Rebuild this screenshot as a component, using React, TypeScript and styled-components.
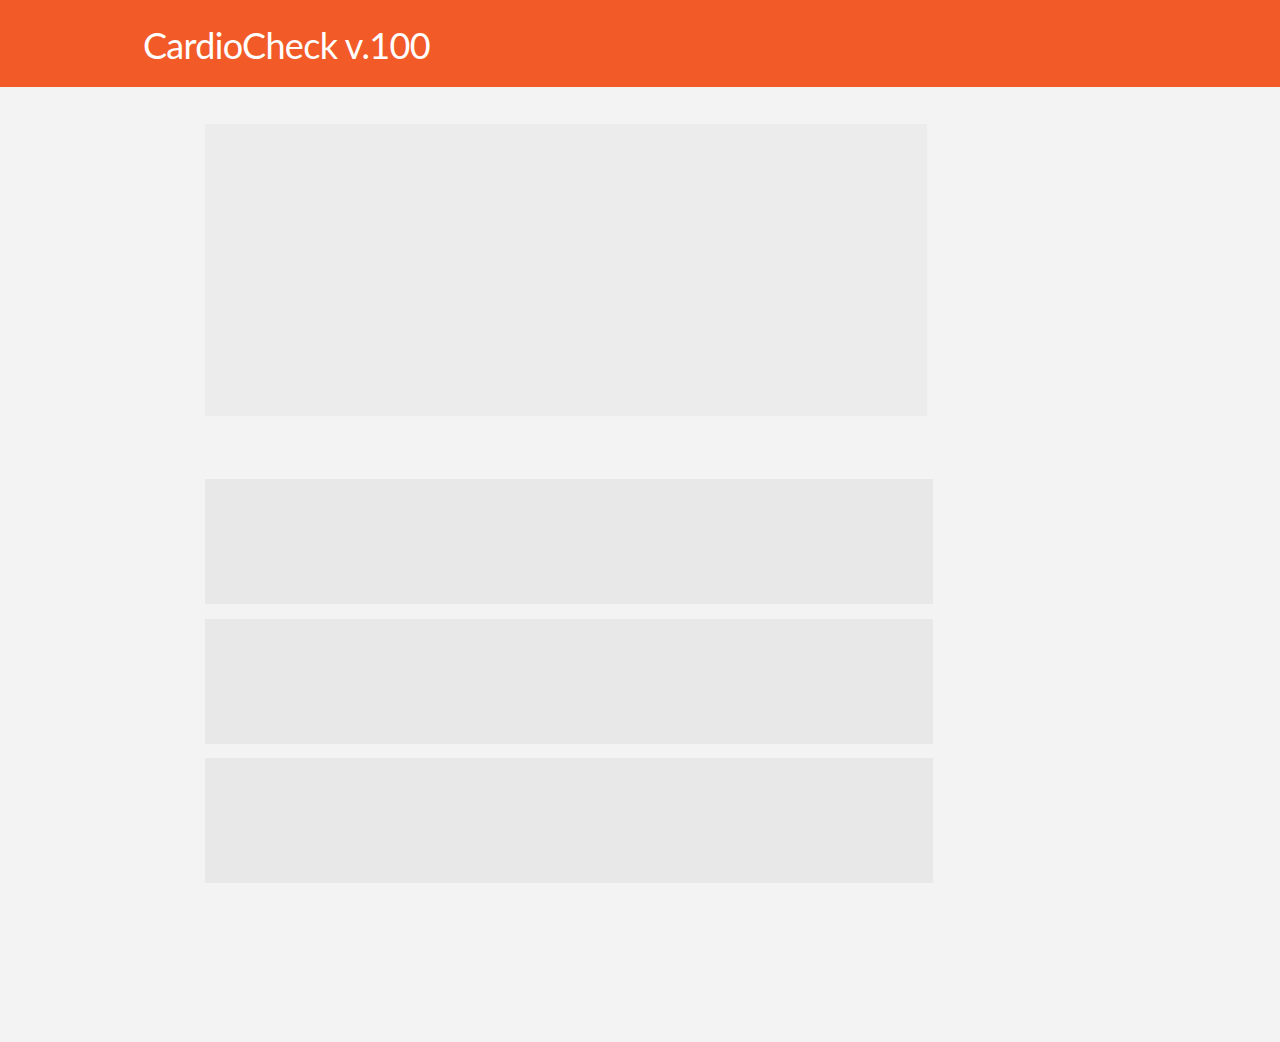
import React from "react";
import styled, { createGlobalStyle } from "styled-components";

const GlobalStyle = createGlobalStyle`
  html, body { margin: 0; padding: 0; background: #f3f3f3; }
  body { font-family: Lato, "Open Sans", sans-serif; }
`;

const Page = styled.div`
  min-height: 1042px;
  background: #f3f3f3;
`;

const Header = styled.header`
  height: 87px;
  background: #f25b27;
  display: flex;
  align-items: center;
  padding: 3px 0 0 143px;
  box-sizing: border-box;
`;

const Title = styled.h1`
  margin: 0;
  font-family: Lato, "Open Sans", sans-serif;
  font-weight: 400;
  font-size: 36px;
  color: #ffffff;
  letter-spacing: -0.7px;
`;

const Main = styled.main`
  padding: 37px 0 0 205px;
  display: flex;
  flex-direction: column;
`;

const Chart = styled.div`
  width: 722px;
  height: 292px;
  background: #ececec;
`;

const List = styled.div`
  margin-top: 63px;
  display: flex;
  flex-direction: column;
  gap: 14.5px;
`;

const Item = styled.div`
  width: 728px;
  height: 125px;
  background: #e8e8e8;
`;

export default function App() {
  return (
    <>
      <GlobalStyle />
      <Page>
        <Header>
          <Title>CardioCheck v.100</Title>
        </Header>
        <Main>
          <Chart />
          <List>
            <Item />
            <Item />
            <Item />
          </List>
        </Main>
      </Page>
    </>
  );
}
